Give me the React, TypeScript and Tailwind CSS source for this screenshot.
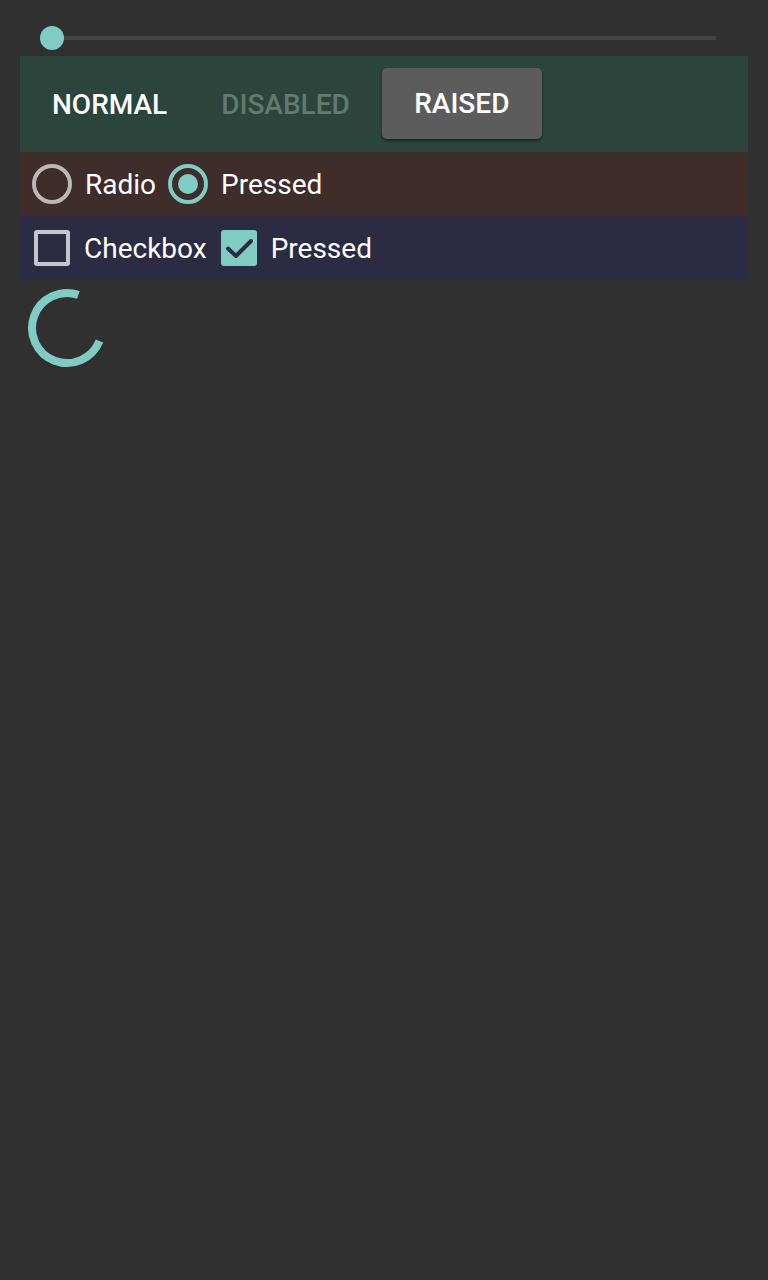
import React from "react";

export default function App() {
  return (
    <div
      className="min-h-[1280px] w-[768px] bg-[#303030] px-5 text-white"
      style={{ fontFamily: "Roboto, 'Noto Sans', sans-serif" }}
    >
      {/* Slider */}
      <div className="h-[56px] px-8 pt-[26px]">
        <div className="relative flex h-[24px] items-center">
          <div className="h-[4px] w-full bg-[#444444]" />
          <div className="absolute left-[-12px] top-0 h-[24px] w-[24px] rounded-full bg-[#80cbc4]" />
        </div>
      </div>

      {/* Buttons */}
      <div className="flex h-[96px] items-center bg-[#2b453d] pt-[2px]">
        <span className="ml-8 text-[28px] font-medium leading-none">NORMAL</span>
        <span className="ml-[54px] text-[28px] font-medium leading-none text-[#62796f]">
          DISABLED
        </span>
        <div className="ml-[32px] mt-[-4px] flex h-[71px] w-[160px] items-center justify-center rounded-[5px] bg-[#5c5c5d] pt-[2px] shadow-[0_2px_3px_rgba(0,0,0,0.45)]">
          <span className="text-[28px] font-medium leading-none">RAISED</span>
        </div>
      </div>

      {/* Radios */}
      <div className="flex h-[64px] items-center bg-[#3e2d2a] pl-3">
        <div className="h-[40px] w-[40px] rounded-full border-[4px] border-[#beb7b6]" />
        <span className="ml-[13px] pt-[2px] text-[28px] leading-none">Radio</span>
        <div className="ml-[12px] flex h-[40px] w-[40px] items-center justify-center rounded-full border-[4px] border-[#80cbc4]">
          <div className="h-[20px] w-[20px] rounded-full bg-[#80cbc4]" />
        </div>
        <span className="ml-[13px] pt-[2px] text-[28px] leading-none">Pressed</span>
      </div>

      {/* Checkboxes */}
      <div className="flex h-[64px] items-center bg-[#2b2c44] pl-[14px]">
        <div className="h-[36px] w-[36px] rounded-[3px] border-[4px] border-[#c4c4cc]" />
        <span className="ml-[14px] pt-[2px] text-[28px] leading-none">Checkbox</span>
        <div className="ml-[14px] flex h-[36px] w-[36px] items-center justify-center rounded-[3px] bg-[#80cbc4]">
          <svg width="36" height="36" viewBox="0 0 36 36">
            <path
              d="M7 18.5 L15 26 L30 11"
              fill="none"
              stroke="#2b2c44"
              strokeWidth="4"
              strokeLinecap="round"
              strokeLinejoin="round"
            />
          </svg>
        </div>
        <span className="ml-[14px] pt-[2px] text-[28px] leading-none">Pressed</span>
      </div>

      {/* Spinner */}
      <div className="ml-[7px] mt-2">
        <svg width="80" height="80" viewBox="0 0 80 80">
          <path
            d="M51.4 6.9 A35 35 0 1 0 72.5 53.1"
            fill="none"
            stroke="#80cbc4"
            strokeWidth="8"
          />
        </svg>
      </div>
    </div>
  );
}
